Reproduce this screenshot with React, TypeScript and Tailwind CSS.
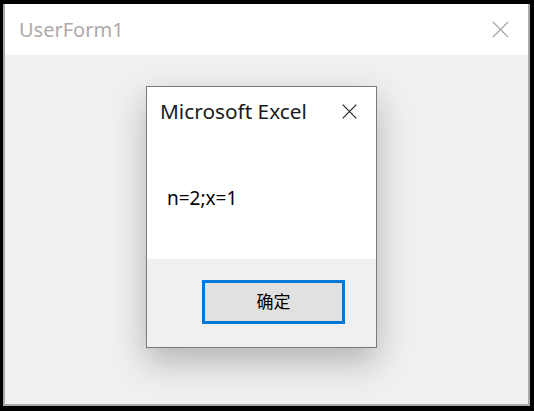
import React from 'react';

const font = { fontFamily: '"Noto Sans", "Noto Sans CJK SC", sans-serif' };

function CloseIcon({ className }: { className: string }) {
  return (
    <svg className={className} viewBox="0 0 20 20" fill="none" stroke="currentColor" strokeWidth="1.4">
      <path d="M2 2L18 18M18 2L2 18" />
    </svg>
  );
}

export default function App() {
  return (
    <div className="w-[534px] h-[411px] bg-black pt-[4px] pl-[3px] pr-[4px] pb-[5px]" style={font}>
      <div className="h-full flex flex-col bg-[#f0f0f0] border-x-2 border-b-2 border-[#a8a8a8]">
        {/* Title bar */}
        <div className="h-[51px] bg-white flex items-center justify-between pl-[14px] pr-[18px]">
          <span className="text-[20px] text-[#b0a8a8] leading-none">UserForm1</span>
          <CloseIcon className="w-[19px] h-[19px] text-[#a0a0a0]" />
        </div>

        {/* Client area */}
        <div className="flex-1 pt-[31px] pl-[141px]">
          <div className="w-[231px] h-[262px] border border-[#7a7a7a] bg-[#f0f0f0] flex flex-col shadow-[0_14px_32px_rgba(0,0,0,0.25)]">
            <div className="h-[172px] bg-white flex flex-col">
              <div className="flex items-center justify-between pl-[13px] pr-[18px] pt-[14px]">
                <span className="text-[20.8px] text-[#1a1a1a] leading-none">Microsoft Excel</span>
                <CloseIcon className="w-[17px] h-[17px] text-[#222]" />
              </div>
              <div className="pl-[20px] pt-[67px] text-[19px] text-black leading-none">n=2;x=1</div>
            </div>
            <div className="flex-1 pt-[21px] pl-[55px]">
              <div className="w-[143px] h-[44px] border-[3px] border-[#0078d7] bg-[#e1e1e1] flex items-center justify-center text-[17px] text-black">
                确定
              </div>
            </div>
          </div>
        </div>
      </div>
    </div>
  );
}
